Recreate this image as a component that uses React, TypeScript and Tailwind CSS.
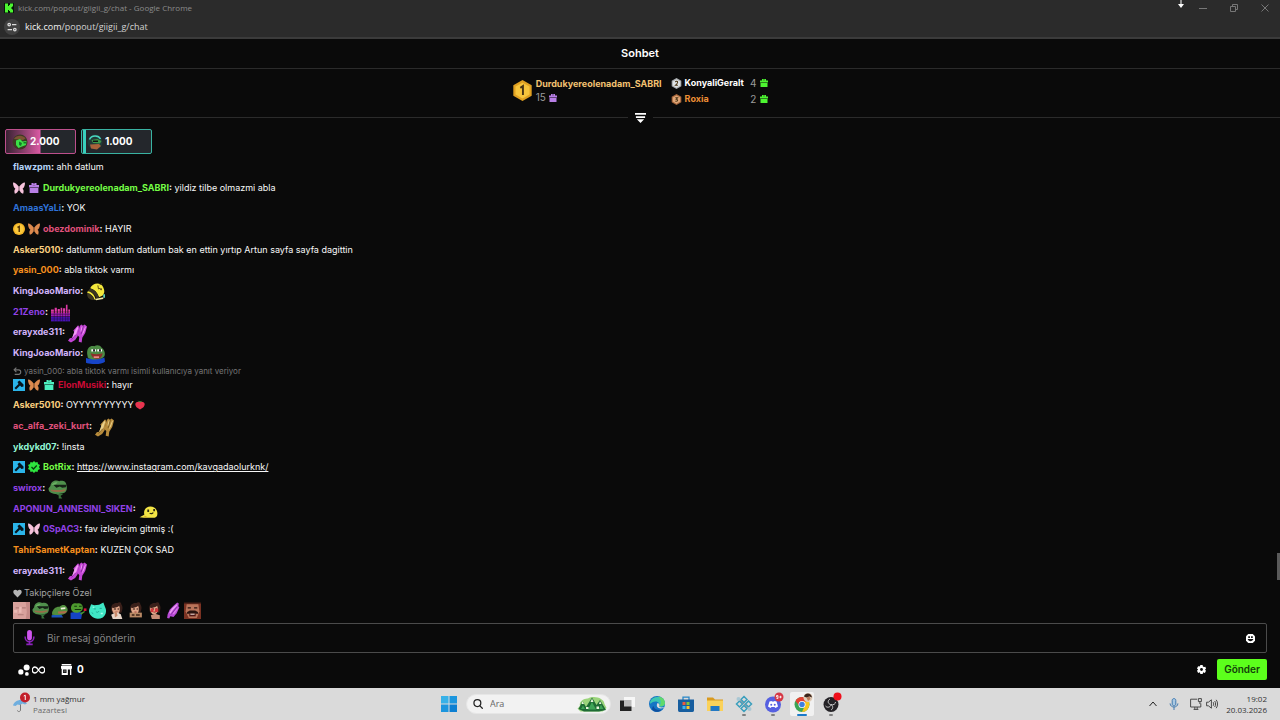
import { useState } from "react";
import type { ReactNode } from "react";

interface Message {
  id: number;
  user: string;
  color: string;
  badges?: BadgeName[];
  text?: string;
  link?: string;
  emote?: EmoteName;
  heart?: boolean;
  reply?: string;
}

type BadgeName = "mod" | "pink" | "orange" | "giftPurple" | "giftTeal" | "first" | "verified";
type EmoteName =
  | "bee"
  | "bars"
  | "purpleHands"
  | "purpleClap"
  | "pepeHappy"
  | "goldHands"
  | "frogCool"
  | "blob"
  | "face"
  | "frogLay"
  | "frogRose"
  | "cat"
  | "girlPray"
  | "girlSign"
  | "girlRed"
  | "laugh";

const messages: Message[] = [
  { id: 1, user: "flawzpm", color: "text-[#b5d3f8]", text: "ahh datlum" },
  {
    id: 2,
    user: "Durdukyereolenadam_SABRI",
    color: "text-[#75fd46]",
    badges: ["pink", "giftPurple"],
    text: "yildiz tilbe olmazmi abla",
  },
  { id: 3, user: "AmaasYaLi", color: "text-[#2f72d8]", text: "YOK" },
  {
    id: 4,
    user: "obezdominik",
    color: "text-[#e0517c]",
    badges: ["first", "orange"],
    text: "HAYIR",
  },
  {
    id: 5,
    user: "Asker5010",
    color: "text-[#fbcf7f]",
    text: "datlumm datlum datlum bak en ettin yırtıp Artun sayfa sayfa dagittin",
  },
  { id: 6, user: "yasin_000", color: "text-[#f6901e]", text: "abla tiktok varmı" },
  { id: 7, user: "KingJoaoMario", color: "text-[#d2b3fa]", emote: "bee" },
  { id: 8, user: "21Zeno", color: "text-[#9242e8]", emote: "bars" },
  { id: 9, user: "erayxde311", color: "text-[#d2b3fa]", emote: "purpleHands" },
  { id: 10, user: "KingJoaoMario", color: "text-[#d2b3fa]", emote: "pepeHappy" },
  {
    id: 11,
    user: "ElonMusiki",
    color: "text-[#c90a35]",
    badges: ["mod", "orange", "giftTeal"],
    text: "hayır",
    reply: "yasin_000: abla tiktok varmı isimli kullanıcıya yanıt veriyor",
  },
  { id: 12, user: "Asker5010", color: "text-[#fbcf7f]", text: "OYYYYYYYYYY", heart: true },
  { id: 13, user: "ac_alfa_zeki_kurt", color: "text-[#e0517c]", emote: "goldHands" },
  { id: 14, user: "ykdykd07", color: "text-[#93f7d4]", text: "!insta" },
  {
    id: 15,
    user: "BotRix",
    color: "text-[#75fd46]",
    badges: ["mod", "verified"],
    link: "https://www.instagram.com/kavgadaolurknk/",
  },
  { id: 16, user: "swirox", color: "text-[#9242e8]", emote: "frogCool" },
  { id: 17, user: "APONUN_ANNESINI_SIKEN", color: "text-[#9242e8]", emote: "blob" },
  {
    id: 18,
    user: "0SpAC3",
    color: "text-[#9242e8]",
    badges: ["mod", "pink"],
    text: "fav izleyicim gitmiş :(",
  },
  { id: 19, user: "TahirSametKaptan", color: "text-[#f6901e]", text: "KUZEN ÇOK SAD" },
  { id: 20, user: "erayxde311", color: "text-[#d2b3fa]", emote: "purpleHands" },
];

const quickEmotes: EmoteName[] = [
  "face",
  "frogCool",
  "frogLay",
  "frogRose",
  "cat",
  "girlPray",
  "girlSign",
  "girlRed",
  "purpleClap",
  "laugh",
];

/* ---------- badges ---------- */

function Gift({ className }: { className: string }) {
  return (
    <svg viewBox="0 0 16 16" className={className} fill="currentColor" aria-hidden="true">
      <path d="M4 0h3l1 2 1-2h3v3h4v4H0V3h4z" />
      <path d="M1 8h14v8H1z" />
      <path d="M6 3h4v1H6z" fill="#000" opacity=".35" />
    </svg>
  );
}

function Butterfly({ className }: { className: string }) {
  return (
    <svg viewBox="0 0 16 16" className={className} fill="currentColor" aria-hidden="true">
      <path d="M7.500 6C5.500 3 3 .5 0 .5 0 4 1 7.500 3.200 9 1.500 10.500 1.500 13 2.500 15.500c2.500-.3 4-2.500 5-5z" />
      <path d="M8.500 6C10.500 3 13 .5 16 .5c0 3.500-1 7-3.200 8.500 1.700 1.500 1.700 4 .7 6.500-2.500-.3-4-2.500-5-5z" />
      <path d="M7.400 5.500h1.200V12H7.400z" opacity=".6" />
    </svg>
  );
}

function Badge({ name }: { name: BadgeName }) {
  if (name === "pink") return <Butterfly className="size-3 shrink-0 text-[#f7c3dc]" />;
  if (name === "orange") return <Butterfly className="size-3 shrink-0 text-[#dd8a4e]" />;
  if (name === "giftPurple") return <Gift className="size-3 shrink-0 p-px text-[#b87fe6]" />;
  if (name === "giftTeal") return <Gift className="size-3 shrink-0 p-px text-[#4cf0c0]" />;
  if (name === "mod") {
    return (
      <svg viewBox="0 0 24 24" className="size-3 shrink-0" aria-hidden="true">
        <path fill="#2bb5ea" d="M0 0h24v24H0z" />
        <path fill="#07141c" d="M9 6l4-3 8 8v4l-4 1-3-3-8 8-3-3 8-8z" />
      </svg>
    );
  }
  if (name === "verified") {
    return (
      <svg viewBox="0 0 24 24" className="size-3 shrink-0" aria-hidden="true">
        <path
          fill="#2ee53f"
          d="M12 0l3 3 4-1 1 4 4 2-2 4 2 4-4 2-1 4-4-1-3 3-3-3-4 1-1-4-4-2 2-4-2-4 4-2 1-4 4 1z"
        />
        <path fill="none" stroke="#073a0c" strokeWidth="2.500" d="M7 12l4 4 6.500-7" />
      </svg>
    );
  }
  return (
    <svg viewBox="0 0 24 24" className="size-3 shrink-0" aria-hidden="true">
      <circle cx="12" cy="12" r="12" fill="#f5b526" />
      <circle cx="12" cy="12" r="9" fill="#fbc93c" />
      <path fill="none" stroke="#5b3a05" strokeWidth="3" d="M9 9l3.500-2v11" />
    </svg>
  );
}

/* ---------- emotes ---------- */

const hands = (light: string, mid: string, dark: string) => (
  <>
    <path fill={mid} d="M0 28l3-4 4-1 4-9-2-3 8-9 2 3-1 8-2 8-4 6-7 4z" />
    <path fill={light} d="M11 12l5-8 1 3-3 10-5 6-2 0z" />
    <path fill={mid} d="M17 14l3-11 3-2 2 2 3-2 4 3-3 11-5 8-1 8-5-1 1-8-3-3z" />
    <path fill={light} d="M21 12l2-8 2 0-2 10zM25 14l4-10 1 1-3 9-4 6z" />
    <path fill="none" stroke={dark} strokeWidth="1.200" d="M6 26l7-8M26 3l-4 14" />
  </>
);

const girl = (
  <>
    <path fill="#3a201a" d="M6 14C5 5 11 1 18 2c2-2 7-2 7 2 4 5 2 12 0 16l-17 1z" />
    <path fill="#e0a688" d="M8 11c3 1 10-1 13-4 2 5 2 10-1 14-3 3-8 3-10-1-2-3-3-6-2-9z" />
    <path fill="#2a1410" d="M11 12h4v2h-4zM18 12h3v2h-3z" />
    <path fill="#a23b3a" d="M14 18h4v2h-4z" />
  </>
);

const emoteArt: Record<EmoteName, ReactNode> = {
  bee: (
    <>
      <path fill="#f3e83c" d="M7 9C11-1 25-2 29 7c3 6 2 11-1 14l-6 3C19 16 14 11 7 9z" />
      <path fill="#3a3420" d="M7 9c7 2 12 7 15 15l-4 4C16 20 10 15 3 14z" />
      <path fill="#f3e83c" d="M3 14c6 1 11 5 13 13l-2 1C12 22 8 18 2 17z" />
      <path fill="#3a3420" d="M2 17c6 1 10 5 12 11-7 2-13-3-12-11z" />
      <path fill="#f6efa4" d="M15 27l14-3v3l-12 2z" />
      <path fill="none" stroke="#5a4c12" strokeWidth="1.600" d="M20 4l1 6 3-1 1 3M26 9v3M23 3l4-2" />
      <path fill="#5fd0b8" d="M29 19h3v6h-3z" />
    </>
  ),
  bars: (
    <>
      <path
        fill="#e03aa8"
        d="M0 11h5v9H0zM6 8h4v12H6zM11 10h4v10h-4zM16 8h3v12h-3zM20 9h4v11h-4zM25 3h3v17h-3zM29 11h3v9h-3z"
      />
      <path fill="#a01cb4" d="M0 17h32v6H0z" />
      <path fill="#4a12b8" d="M0 23h32v8H0z" />
      <path
        stroke="#0b0b0b"
        strokeWidth=".6"
        d="M5.500 3v28M10.500 3v28M15.500 3v28M19.500 3v28M24.500 3v28M28.500 3v28M0 15h32M0 19h32M0 23h32M0 27h32"
      />
    </>
  ),
  purpleHands: hands("#f29af5", "#c445d6", "#7a1b93"),
  purpleClap: (
    <>
      <path fill="#b94bd6" d="M4 30l1-7 4-9 8-8 6-5 3 2-1 5 2 2-5 11-6 7-6-1-2 4z" />
      <path fill="#eda0f4" d="M8 20l5-8 9-8 1 2-8 9-5 7z" />
      <path fill="#dc78ea" d="M14 22l9-11 1 2-7 10z" />
      <path fill="none" stroke="#6f1d8c" strokeWidth="1.200" d="M11 24l11-14" />
    </>
  ),
  goldHands: hands("#ead08a", "#b88c3c", "#6a4a17"),
  pepeHappy: (
    <>
      <path fill="#1745c8" d="M0 22c8 2 22 3 31-1l1 7c-6 5-26 5-32 2z" />
      <path fill="#4c8b45" d="M2 15C1 5 7 0 14 2c4-3 10-2 12 2 5 3 7 10 5 15-5 7-23 7-28 2z" />
      <path fill="#fff" d="M9 7h8v4H9zM19 7h8v4h-8z" />
      <path fill="#111" d="M12 7h3v4h-3zM22 7h3v4h-3z" />
      <path fill="#8e2f2a" d="M8 14c6 2 12 2 20 0-1 8-6 10-11 9-5 0-8-4-9-9z" />
      <path fill="#e98a86" d="M13 19h9v3h-9z" />
    </>
  ),
  frogCool: (
    <>
      <path fill="#4f8f4c" d="M4 10c1-9 10-11 15-8 5-2 12 0 12 7 2 6 0 12-5 13l-10 2C6 24 0 20 1 14z" />
      <path fill="#152015" d="M9 8l22 0-1 4-6 1-4-2-6 2z" />
      <path fill="#9a6a48" d="M4 16c7 1 17 2 25-1v3c-7 3-17 3-23 1z" />
      <path fill="#39723b" d="M13 23h13l-5 4 3 4h-6v-5z" />
      <path fill="#6cb364" d="M6 9c2-5 7-6 10-5l-3 3z" />
    </>
  ),
  blob: (
    <>
      <path fill="#f3e545" d="M1 29l8-4c-2-8 3-14 10-14 8 0 12 6 12 12 0 5-3 7-8 7H8z" />
      <path fill="#2c2a10" d="M14 16h3v4h-3zM24 15h3v4h-3z" />
      <path fill="none" stroke="#2c2a10" strokeWidth="2" d="M18 22c2 2 5 1 6-1" />
      <path fill="#d8a92a" d="M9 26l6 3h-6z" />
    </>
  ),
  face: (
    <>
      <path fill="#d8a19c" d="M0 0h32v32H0z" />
      <path fill="#c48a87" d="M24 0h8v32h-8l2-13z" />
      <path fill="#b07c78" d="M5 10h7v2H5zM17 10h7v2h-7zM9 23h11v2H9z" />
      <path fill="#e9b9b3" d="M12 9h4v11h-5zM2 15h6v5H2z" />
    </>
  ),
  frogLay: (
    <>
      <path fill="#1c56b8" d="M1 25l17-4 5 8H1z" />
      <path fill="#528f3f" d="M2 20C4 12 11 8 16 9c5-5 11-4 13 0 4 5 3 10-3 13-8 4-17 2-24 2z" />
      <path fill="#f1f2dc" d="M18 11l9-1v3l-8 1z" />
      <path fill="#b0694a" d="M13 18l17-1-3 4-13 1z" />
    </>
  ),
  frogRose: (
    <>
      <path fill="#1543c4" d="M1 20l13-2 9 2-2 12H1z" />
      <path fill="#4d9a2e" d="M2 13C1 4 8 1 13 3c6-2 10 1 11 6 1 6-3 10-9 11-7 1-12-2-13-7z" />
      <path fill="#12300c" d="M8 7h5v2H8zM17 7h5v2h-5zM9 13h12v2H9z" />
      <path fill="#4d9a2e" d="M19 21l8-4 1 2-7 5z" />
      <path fill="#d5143a" d="M26 12h5v5h-5z" />
    </>
  ),
  cat: (
    <>
      <path fill="#3fe7c5" d="M1 12l3-8 6 2 9-1 8-4 3 8c4 7 2 16-4 20-7 4-16 3-21-2C0 22-1 17 1 12z" />
      <path fill="none" stroke="#1fa08c" strokeWidth="1.600" d="M9 13h4M20 12h4M13 18c2 2 4 2 6-1M5 20l3 2" />
      <path fill="#a8fff0" d="M7 9h3v2H7zM22 20h4v3h-4z" />
    </>
  ),
  girlPray: (
    <>
      {girl}
      <path fill="#e8d6c8" d="M6 24l10-5 8 4 3 9H9z" />
      <path fill="#c98a6a" d="M12 19l4-2 2 9-5 3z" />
    </>
  ),
  girlSign: (
    <>
      {girl}
      <path fill="#b98965" d="M5 20h23v9H5z" />
      <path fill="#3c2216" d="M9 23h5v3H9zM17 23h7v3h-7z" />
    </>
  ),
  girlRed: (
    <>
      {girl}
      <path fill="#d3373c" d="M9 12h5v7H9zM17 12h6v7h-6z" />
      <path fill="#c88f78" d="M9 25l8-3 9 3v7H11z" />
    </>
  ),
  laugh: (
    <>
      <path fill="#7a3222" d="M0 0h32v32H0z" />
      <path fill="#b9745a" d="M5 4h22l2 14-5 12H9L3 18z" />
      <path fill="#2a1410" d="M0 0h32v3H0zM7 10h6v2H7zM19 10h6v2h-6zM6 19l5-3h10l5 3 1 3H5z" />
      <path fill="#4d1614" d="M10 22h12v5H10z" />
      <path fill="#e9d9cf" d="M12 22h8v2h-8z" />
    </>
  ),
};

function Emote({ name, className }: { name: EmoteName; className: string }) {
  return (
    <svg viewBox="0 0 32 32" className={className} aria-hidden="true">
      {emoteArt[name]}
    </svg>
  );
}

function Hexagon({ rank, from, to, className }: { rank: 1 | 2 | 3; from: string; to: string; className: string }) {
  const digit = {
    1: "M9.500 9l3-2v10",
    2: "M9.500 9c1-3 5.500-2 5 .8-.4 2-3 4-5 6.200h5.500",
    3: "M9.500 8h5l-3 3.500c4 0 4.500 5-2 4.500",
  }[rank];
  return (
    <svg viewBox="0 0 24 24" className={className} aria-hidden="true">
      <path fill={from} d="M12 0l10.500 6v12L12 24 1.500 18V6z" />
      <path fill={to} d="M12 3l8 4.500v9L12 21l-8-4.500v-9z" />
      <path fill="none" stroke="#4a3514" strokeWidth="2.200" d={digit} />
    </svg>
  );
}

/* ---------- window frame ---------- */

function BrowserBar() {
  return (
    <header className="relative border-b-2 border-[#3b3b3b] bg-[#2b2b2b] font-['Open_Sans',sans-serif]">
      <div className="flex h-[15px] items-center gap-1 pr-[11px] pl-1">
        <svg viewBox="0 0 20 20" className="size-[10px]" aria-hidden="true">
          <path fill="#06180a" d="M0 0h20v20H0z" />
          <path fill="#4df531" d="M2 1h6v5h2V4h2V1h6v6h-2v2h-2v2h2v2h2v6h-6v-3h-2v-2H8v5H2z" />
        </svg>
        <span className="text-[8px] text-[#8c8c8c]">kick.com/popout/giigii_g/chat - Google Chrome</span>
        <div className="ml-auto flex items-center gap-[23px] text-[#777]">
          <button type="button" aria-label="Simge durumuna küçült">
            <svg viewBox="0 0 8 8" className="size-2" stroke="currentColor">
              <path d="M0 4.500h8" />
            </svg>
          </button>
          <button type="button" aria-label="Önceki boyut">
            <svg viewBox="0 0 8 8" className="size-2" fill="none" stroke="currentColor">
              <path d="M.5 2.500h5v5h-5zM2.500 2V.5h5v5H6" />
            </svg>
          </button>
          <button type="button" aria-label="Kapat">
            <svg viewBox="0 0 8 8" className="size-2" stroke="currentColor">
              <path d="M.5.5l7 7M7.500.5l-7 7" />
            </svg>
          </button>
        </div>
      </div>
      <div className="flex h-[22px] items-center gap-[5px] pt-px pl-1">
        <span className="flex size-4 items-center justify-center rounded-full bg-[#414141]">
          <svg viewBox="0 0 16 16" className="size-[10px]" fill="none" stroke="#dcdcdc" strokeWidth="2" aria-hidden="true">
            <circle cx="3.500" cy="4" r="2" />
            <circle cx="12.500" cy="12" r="2" />
            <path d="M8 4h7M1 12h7" />
          </svg>
        </span>
        <span className="text-[9px] text-[#d2d2d2]">
          <span className="text-[#f2f2f2]">kick.com</span>/popout/giigii_g/chat
        </span>
      </div>
      <svg viewBox="0 0 6 8" className="absolute top-0 right-24 h-2 w-[6px]" aria-hidden="true">
        <path fill="#fff" d="M2.500 0h1v4H6L3 8 0 4h2.500z" />
      </svg>
    </header>
  );
}

function Leaderboard() {
  return (
    <section className="pt-2">
      <div className="flex items-start justify-center gap-[9px]">
        <div className="flex items-center gap-[3px]">
          <Hexagon rank={1} from="#e0a021" to="#f8c53c" className="size-[21px]" />
          <div>
            <div className="text-[9px] leading-[14px] font-bold text-[#f3c272]">Durdukyereolenadam_SABRI</div>
            <div className="flex items-center gap-[3px] text-[10px] leading-[13px] text-[#9a9a9a]">
              15 <Gift className="size-2 text-[#b87fe6]" />
            </div>
          </div>
        </div>
        <div className="text-[10px]">
          <div className="flex h-3 items-center">
            <Hexagon rank={2} from="#a9adb0" to="#dfe3e5" className="size-[11px]" />
            <span className="ml-[3px] flex-1 pr-[6px] text-[9px] font-bold text-white">KonyaliGeralt</span>
            <span className="text-[#9a9a9a]">4</span>
            <Gift className="ml-1 size-2 text-[#4df531]" />
          </div>
          <div className="mt-1 flex h-3 items-center">
            <Hexagon rank={3} from="#a8683c" to="#e0a678" className="size-[11px]" />
            <span className="ml-[3px] flex-1 pr-[6px] text-[9px] font-bold text-[#ee8f35]">Roxia</span>
            <span className="text-[#9a9a9a]">2</span>
            <Gift className="ml-1 size-2 text-[#4df531]" />
          </div>
        </div>
      </div>
      <div className="mt-[7px] flex items-center gap-[7px]">
        <div className="h-px flex-1 bg-[#2b2b2b]" />
        <button type="button" aria-label="Genişlet">
          <svg viewBox="0 0 12 12" className="size-[11px]" fill="#fff">
            <path d="M0 1h12v2H0zM1 4.500h10v2H1zM2 8h8L6 12z" />
          </svg>
        </button>
        <div className="h-px flex-1 bg-[#2b2b2b]" />
      </div>
    </section>
  );
}

function PinnedGifts() {
  return (
    <div className="mt-[6px] flex gap-[5px] px-[5px] text-[10px] font-bold text-white">
      <div className="flex h-[25px] w-[71px] items-center gap-[2px] rounded-xs border border-[#bd4f8c] bg-[#24272c] bg-linear-to-r from-[#3a2233] to-[#dd5ba6] bg-[length:50%_100%] bg-no-repeat pl-[6px]">
        <svg viewBox="0 0 32 32" className="size-4" aria-hidden="true">
          <circle cx="16" cy="16" r="15" fill="#3d3a24" />
          <path fill="#7b5432" d="M4 10C8 2 22 1 27 9l-5 3z" />
          <path fill="#3be047" d="M8 13l8-3 5 5 8-1-1 8-8 3-7 3-5-6z" />
          <path fill="#157a26" d="M14 15l6 3-2 6-4-2zM23 16h5v3h-5z" />
        </svg>
        2.000
      </div>
      <div className="flex h-[25px] w-[71px] items-center gap-px rounded-xs border border-[#39b3a2] bg-[#24272c] pl-px">
        <span className="h-full w-[3px] bg-[#39d0bd]" />
        <svg viewBox="0 0 32 32" className="size-4" aria-hidden="true">
          <circle cx="16" cy="16" r="15" fill="#203a38" />
          <path fill="none" stroke="#49d6c0" strokeWidth="3" d="M5 11C9 2 23 2 27 10" />
          <path fill="#3a9a4a" d="M9 12l12-2 8 4-3 5-14-1z" />
          <path fill="#a9623a" d="M6 21l18-1 4 4-8 7-12-2z" />
          <path fill="#111" d="M12 13h10v3H12z" />
        </svg>
        <span className="pl-px">1.000</span>
      </div>
    </div>
  );
}

/* ---------- chat ---------- */

function ChatLine({ message }: { message: Message }) {
  return (
    <div className="flex h-5 items-center gap-[3px]">
      {message.badges?.map((b) => (
        <Badge key={b} name={b} />
      ))}
      <span className="whitespace-pre">
        <span className={`font-bold ${message.color}`}>{message.user}</span>
        <span className="font-bold">:</span>
        {message.text && ` ${message.text}`}
        {message.link && (
          <>
            {" "}
            <a href={message.link} className="underline">
              {message.link}
            </a>
          </>
        )}
      </span>
      {message.heart && (
        <svg viewBox="0 0 16 16" className="-ml-[2px] size-[10px]" aria-hidden="true">
          <path fill="#e8344f" d="M8 15l-5-3C-2 7 1 1 8 3c7-2 10 4 5 9z" />
          <path fill="#3f9a3c" d="M4 1l4 3 4-3-4 1z" />
        </svg>
      )}
      {message.emote && <Emote name={message.emote} className="mt-[2px] size-[19px] shrink-0" />}
    </div>
  );
}

function ChatMessages() {
  return (
    <div className="relative flex flex-1 flex-col">
      <ul className="mt-[3px] flex flex-1 flex-col justify-between px-[13px] text-[9px] leading-3 text-[#f7f7f7]">
        {messages.map((message) => (
          <li key={message.id}>
            {message.reply && (
              <div className="flex h-[11px] items-center gap-[2px] pt-1 text-[8px] text-[#757575]">
                <svg viewBox="0 0 16 16" className="size-[9px]" fill="none" stroke="currentColor" strokeWidth="2" aria-hidden="true">
                  <path d="M6 1L2 5l4 4M2 5h8c5 0 5 8 0 8H3" />
                </svg>
                {message.reply}
              </div>
            )}
            <ChatLine message={message} />
          </li>
        ))}
      </ul>
      <span className="absolute right-0 bottom-px h-[27px] w-[3px] bg-[#5a5a5a]" />
    </div>
  );
}

function MessageForm() {
  const [draft, setDraft] = useState("");

  return (
    <form className="px-[13px]" onSubmit={(e) => e.preventDefault()}>
      <div className="mt-[6px] flex h-3 items-center gap-[2px] text-[9px] text-[#a3a3a3]">
        <svg viewBox="0 0 16 16" className="size-[9px]" fill="#b5b5b5" aria-hidden="true">
          <path d="M8 15L2 9C-2 4 3-1 8 3c5-4 10 1 6 6z" />
        </svg>
        Takipçilere Özel
      </div>
      <div className="mt-[3px] flex gap-[2px]">
        {quickEmotes.map((name) => (
          <button key={name} type="button" aria-label={name}>
            <Emote name={name} className="size-[17px]" />
          </button>
        ))}
      </div>
      <div className="mt-1 flex h-[30px] items-center gap-[11px] rounded-xs border border-[#4b4b4b] pr-[11px] pl-[9px]">
        <svg viewBox="0 0 16 20" className="h-4 w-[13px]" aria-hidden="true">
          <path fill="#cf55ee" d="M5 3c0-4 6-4 6 0v7c0 4-6 4-6 0z" />
          <path fill="none" stroke="#8c22bd" strokeWidth="2" d="M2.500 8c0 9 11 9 11 0" />
          <path fill="#8c22bd" d="M7 15h2v2h3v2H4v-2h3z" />
        </svg>
        <input
          type="text"
          value={draft}
          onChange={(e) => setDraft(e.target.value)}
          aria-label="Bir mesaj gönderin"
          placeholder="Bir mesaj gönderin"
          className="min-w-0 flex-1 text-[10px] text-white placeholder:text-[#858585] focus:outline-none"
        />
        <button type="button" aria-label="İfadeler">
          <svg viewBox="0 0 16 16" className="size-[9px]" aria-hidden="true">
            <path fill="#fff" d="M4 0h8l4 4v8l-4 4H4l-4-4V4z" />
            <path fill="#111" d="M4 4h3v3H4zM9 4h3v3H9zM3 9h10c-1 5-9 5-10 0z" />
          </svg>
        </button>
      </div>
      <div className="mt-[6px] mb-2 flex h-[21px] items-center text-[10px] text-white">
        <svg viewBox="0 0 16 16" className="ml-[5px] size-3" fill="#fff" aria-hidden="true">
          <circle cx="11.500" cy="4.500" r="4" />
          <circle cx="3.800" cy="10.500" r="3.500" />
          <circle cx="11.800" cy="13.300" r="2.500" />
        </svg>
        <svg viewBox="0 0 24 14" className="ml-[2px] h-2 w-[13px]" fill="none" stroke="#fff" strokeWidth="2.400" aria-hidden="true">
          <path d="M12 7C9 2 7 1.500 5.500 1.500a5 5.500 0 000 11C7 12.500 9 12 12 7s5-5.500 6.500-5.500a5 5.500 0 010 11C17 12.500 15 12 12 7z" />
        </svg>
        <svg viewBox="0 0 16 16" className="ml-4 size-[11px]" aria-hidden="true">
          <path fill="#fff" d="M1 0h14v2H1zM0 3h16v4h-1v9H1V7H0z" />
          <path fill="#0a0a0a" d="M3 8h5v5H3zM10 8h3v8h-3z" />
          <path fill="#fff" d="M4 9h3v3H4z" opacity=".3" />
        </svg>
        <span className="ml-[5px] font-bold">0</span>
        <button type="button" aria-label="Sohbet ayarları" className="ml-auto">
          <svg viewBox="0 0 16 16" className="size-[9px]" aria-hidden="true">
            <path
              fill="#fff"
              d="M6 0h4l.5 2.500 2 1L15 3l1 4-2 1 2 2-2 4-3-1-1 3H6l-1-3-3 1-2-4 2-2-2-2 2-4 2.500.5 1-1z"
            />
            <circle cx="8" cy="8" r="2.500" fill="#0a0a0a" />
          </svg>
        </button>
        <button type="submit" className="ml-[11px] h-full rounded-xs bg-[#5cff1c] px-[7px] font-semibold text-[#13400a]">
          Gönder
        </button>
      </div>
    </form>
  );
}

/* ---------- taskbar ---------- */

function TaskbarApp({ label, state, children }: { label: string; state?: "open" | "active"; children: ReactNode }) {
  return (
    <button
      type="button"
      aria-label={label}
      className={
        state === "active"
          ? "relative flex size-6 items-center justify-center rounded-xs bg-[#f1f1f1]"
          : "relative flex size-6 items-center justify-center"
      }
    >
      <svg viewBox="0 0 32 32" className="size-4 overflow-visible" aria-hidden="true">
        {children}
      </svg>
      {state === "open" && <span className="absolute bottom-0 h-[2px] w-1 rounded-full bg-[#808080]" />}
      {state === "active" && <span className="absolute bottom-0 h-[2px] w-[10px] rounded-full bg-[#1a7ac9]" />}
    </button>
  );
}

function Taskbar() {
  return (
    <footer className="grid h-8 grid-cols-[1fr_auto_1fr] items-center bg-[#dadada] font-['Open_Sans',sans-serif] text-[8px] text-[#333]">
      <div className="flex items-center gap-1 pl-[13px]">
        <svg viewBox="0 0 32 36" className="h-5 w-4 overflow-visible" aria-hidden="true">
          <path fill="#6faede" d="M0 21C3 10 20 5 28 17l-4 2-5-2-5 3-5-1-4 3z" />
          <path fill="none" stroke="#777" strokeWidth="2" d="M15 19v11c0 4-6 4-6 1" />
          <circle cx="24" cy="5" r="10" fill="#c31f2a" />
          <path fill="none" stroke="#fff" strokeWidth="2" d="M21.500 2l3-1.500V10" />
        </svg>
        <div className="leading-[11px]">
          <div>1 mm yağmur</div>
          <div className="text-[#6a6a6a]">Pazartesi</div>
        </div>
      </div>

      <div className="flex items-center gap-[5px]">
        <TaskbarApp label="Başlat">
          <path fill="#37b1e8" d="M0 0h15v15H0z" />
          <path fill="#1c96de" d="M17 0h15v15H17zM0 17h15v15H0z" />
          <path fill="#0c7fd2" d="M17 17h15v15H17z" />
        </TaskbarApp>
        <label className="flex h-5 w-[145px] items-center gap-[7px] rounded-full border border-[#e6e6e6] bg-[#f2f2f2] pr-[3px] pl-[6px]">
          <svg viewBox="0 0 16 16" className="size-[10px] shrink-0" fill="none" stroke="#222" strokeWidth="2" aria-hidden="true">
            <circle cx="7" cy="6.500" r="5.500" />
            <path d="M11 11l4.500 4.500" />
          </svg>
          <input
            type="search"
            placeholder="Ara"
            aria-label="Ara"
            className="min-w-0 flex-1 text-[9px] placeholder:text-[#666] focus:outline-none"
          />
          <svg viewBox="0 0 60 32" className="h-4 w-[30px] shrink-0" aria-hidden="true">
            <path fill="#9bd47b" d="M6 20C3 12 14 4 22 5 34-2 54 4 55 16l4 8-8 7H7l-6-6z" />
            <path fill="#1f6b35" d="M3 26l8-16 7 12L30 3l9 15 7-10 12 20-14 3H14z" />
            <path fill="#3fa557" d="M22 27l8-15 8 15zM44 26l4-9 5 9zM8 26l4-7 4 7z" />
            <path fill="#e9f5dc" d="M11 10l3 6h-5zM30 5l3 7h-6zM46 10l3 6h-5zM18 22h5v4h-5zM39 21h5v5h-5z" />
          </svg>
        </label>
        <TaskbarApp label="Görev görünümü">
          <path fill="#f7f7f7" d="M8 2h22v20H8z" />
          <path fill="#bdbdbd" d="M8 8h15v14H8z" />
          <path fill="#222" d="M0 9h8v12h15v9H0z" />
        </TaskbarApp>
        <TaskbarApp label="Edge">
          <circle cx="16" cy="16" r="16" fill="#1475c4" />
          <path fill="#3cc6b1" d="M2 12C7-3 31-1 32 15c0 5-7 8-12 6 3-5-1-10-7-10-5 0-8 2-10 5z" />
          <path fill="#60d96c" d="M19 1c10 2 13 8 13 14-1 4-6 6-11 5 5-7 2-13-2-19z" />
          <path fill="#0d4f9f" d="M9 20c1 6 7 9 16 8-5 5-14 5-19-1 0-3 1-6 3-7z" />
          <path fill="#dadada" d="M17 14c4 1 5 5 3 7 4 3 10 2 12 0-3 5-14 5-16 0-1-3 0-5 1-7z" />
        </TaskbarApp>
        <TaskbarApp label="Microsoft Store">
          <path fill="none" stroke="#2585c7" strokeWidth="2.500" d="M10 8V2h12v6" />
          <path fill="#175e9f" d="M0 7h32v21c0 2-1 4-3 4H3c-2 0-3-2-3-4z" />
          <path fill="#ee5a3e" d="M9 12h6v6H9z" />
          <path fill="#7fc241" d="M17 12h6v6h-6z" />
          <path fill="#3fb4f0" d="M9 20h6v6H9z" />
          <path fill="#fbc32c" d="M17 20h6v6h-6z" />
        </TaskbarApp>
        <TaskbarApp label="Dosya Gezgini">
          <path fill="#d99a1f" d="M0 3h12l4 4h16v8H0z" />
          <path fill="#fbd25a" d="M0 9h32v21H0z" />
          <path fill="#2278c4" d="M7 20h18v10H7z" />
        </TaskbarApp>
        <TaskbarApp label="Ekran aracı" state="open">
          <g fill="none" stroke="#3b9fbd" strokeWidth="3">
            <path d="M16 1l6 6-6 6-6-6zM16 19l6 6-6 6-6-6zM7 10l6 6-6 6-6-6zM25 10l6 6-6 6-6-6z" />
            <path stroke="#7f95a3" strokeWidth="2" d="M4 5l24 22" />
          </g>
          <circle cx="5" cy="6" r="4" fill="#a9c7d4" />
          <circle cx="27" cy="26" r="4" fill="#a9c7d4" />
        </TaskbarApp>
        <TaskbarApp label="Discord" state="open">
          <circle cx="16" cy="17" r="16" fill="#5660e0" />
          <path fill="#fff" d="M9 11l4-1 1 1h4l1-1 4 1 3 10-5 3-2-2h-6l-2 2-5-3z" />
          <circle cx="12.500" cy="17.500" r="2" fill="#5660e0" />
          <circle cx="19.500" cy="17.500" r="2" fill="#5660e0" />
          <circle cx="28" cy="2" r="9" fill="#d63845" />
          <path fill="none" stroke="#fff" strokeWidth="1.600" d="M26 2h-3v-3h3v6h-3M28.500 2h5M31-.5v5" />
        </TaskbarApp>
        <TaskbarApp label="Chrome" state="active">
          <circle cx="16" cy="17" r="15" fill="#3aa655" />
          <path fill="#e34133" d="M3 10C8-1 25-1 30 12H16l-5 8z" />
          <path fill="#f7c51e" d="M30 11c3 11-4 21-14 21l6-13-2-8z" />
          <circle cx="16" cy="17" r="7" fill="#fff" />
          <circle cx="16" cy="17" r="5.500" fill="#3f7fe0" />
          <circle cx="28" cy="3" r="9" fill="#e0cdb9" />
          <path fill="#3b241a" d="M20 1c2-8 15-8 16 2l-5-2-6 2z" />
          <path fill="#b97e5d" d="M25 3l6-2 2 5-5 4z" />
        </TaskbarApp>
        <TaskbarApp label="OBS Studio" state="open">
          <circle cx="16" cy="17" r="15" fill="#242226" />
          <path fill="none" stroke="#c9c9c9" strokeWidth="2" d="M14 6c-5 3-5 9 1 11 6 2 10-1 10-5M16 17c-1 6-8 7-11 3M16 17c5 3 4 9 0 11" />
          <circle cx="29" cy="1" r="8" fill="#f00f1b" />
        </TaskbarApp>
      </div>

      <div className="flex items-center justify-end pr-[13px] text-[#333]">
        <svg viewBox="0 0 16 16" className="size-2" fill="none" stroke="#222" strokeWidth="2" aria-hidden="true">
          <path d="M1 12l7-8 7 8" />
        </svg>
        <svg viewBox="0 0 16 20" className="ml-3 h-3 w-[10px]" fill="none" stroke="#3b76ad" strokeWidth="1.600" aria-hidden="true">
          <path fill="#a9c8e2" d="M5 4c0-4 6-4 6 0v6c0 4-6 4-6 0z" />
          <path d="M1.500 9c0 8 13 8 13 0M8 15v5" />
        </svg>
        <svg viewBox="0 0 20 20" className="ml-[11px] size-3" fill="none" stroke="#444" strokeWidth="1.600" aria-hidden="true">
          <path d="M12 2H1v13h17v-6M6 19h8M8 15v4M12 15v4M14 1h5v5h-5zM16.500 6v4" />
        </svg>
        <svg viewBox="0 0 20 20" className="ml-1 size-3" fill="none" stroke="#444" strokeWidth="1.600" aria-hidden="true">
          <path d="M1 7h3l5-4v14l-5-4H1zM12 7c1 2 1 4 0 6M14.500 5c2 3 2 7 0 10M17 3c3 4 3 10 0 14" />
        </svg>
        <div className="ml-2 text-right leading-[11px]">
          <div>19:02</div>
          <div>20.03.2026</div>
        </div>
      </div>
    </footer>
  );
}

export default function App() {
  return (
    <div className="flex min-h-screen flex-col bg-[#0a0a0a] font-['Inter',sans-serif] text-white">
      <BrowserBar />
      <main className="flex flex-1 flex-col">
        <h1 className="flex h-[30px] items-center justify-center border-b border-[#2b2b2b] text-[11px] font-semibold">Sohbet</h1>
        <Leaderboard />
        <PinnedGifts />
        <ChatMessages />
        <MessageForm />
      </main>
      <Taskbar />
    </div>
  );
}
